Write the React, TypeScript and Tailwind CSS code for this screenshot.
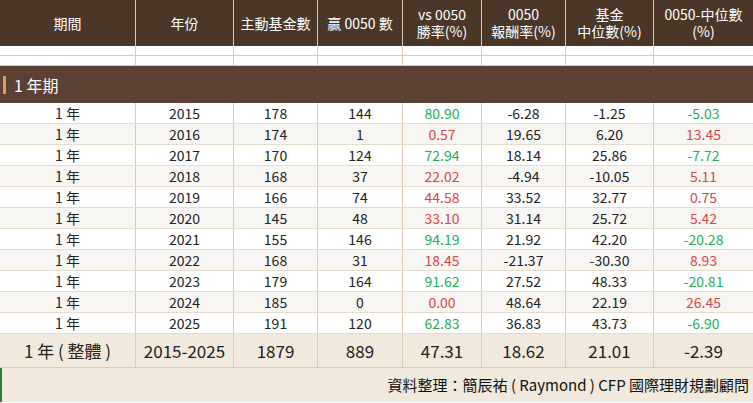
const rows: [string,string,string,string,string,string,string][] = [
["2015","178","144","80.90","-6.28","-1.25","-5.03"],
["2016","174","1","0.57","19.65","6.20","13.45"],
["2017","170","124","72.94","18.14","25.86","-7.72"],
["2018","168","37","22.02","-4.94","-10.05","5.11"],
["2019","166","74","44.58","33.52","32.77","0.75"],
["2020","145","48","33.10","31.14","25.72","5.42"],
["2021","155","146","94.19","21.92","42.20","-20.28"],
["2022","168","31","18.45","-21.37","-30.30","8.93"],
["2023","179","164","91.62","27.52","48.33","-20.81"],
["2024","185","0","0.00","48.64","22.19","26.45"],
["2025","191","120","62.83","36.83","43.73","-6.90"],
];
const W = ["w-[136px]","w-[98px]","w-[84px]","w-[85px]","w-[79px]","w-[84px]","w-[88px]","w-[99px]"];
const g = "text-[#1fae55]", r = "text-[#d84545]";
export default function App(){
  const cell = (i:number, extra="") => `${W[i]} shrink-0 border-r border-[#dccbb0] last:border-r-0 flex items-center justify-center ${extra}`;
  return (
    <div className="w-[753px] h-[403px] bg-white text-[#222] overflow-hidden" style={{fontFamily:'"Noto Sans CJK TC","Noto Sans",sans-serif'}}>
      <div className="flex h-[46px] bg-[#4a3728] text-white text-[14px] leading-[17px] text-center">
        {["期間","年份","主動基金數","贏 0050 數","vs 0050\n勝率(%)","0050\n報酬率(%)","基金\n中位數(%)","0050-中位數\n(%)"].map((t,i)=>(
          <div key={i} className={cell(i,"whitespace-pre-line border-[#a08a70]")}>{t}</div>))}
      </div>
      {[0,1].map(k=>(<div key={k} className="flex h-[10px] border-b border-[#dccbb0]">{W.map((_,i)=><div key={i} className={cell(i)}/>)}</div>))}
      <div className="h-[37px] bg-[#5c4033] flex items-center text-white text-[16px]">
        <div className="ml-[3px] w-[3px] h-[18px] bg-[#e0a050] mr-[8px]"/>1 年期
      </div>
      {rows.map((row,ri)=>(
        <div key={ri} className={`flex h-[21px] text-[14px] border-b border-[#e6dccb] ${ri%2? "bg-[#f8f6f2]":"bg-white"}`}>
          <div className={cell(0)}>1 年</div>
          {row.map((v,i)=>{
            let c="";
            if(i===3) c = parseFloat(v)>=50? g:r;
            if(i===6) c = parseFloat(v)<0? g:r;
            return <div key={i} className={cell(i+1,c)}>{v}</div>;
          })}
        </div>
      ))}
      <div className="flex h-[34px] bg-[#f0e9dc] text-[17px] border-b border-[#dccbb0]">
        {["1 年 ( 整體 )","2015-2025","1879","889","47.31","18.62","21.01","-2.39"].map((t,i)=>(
          <div key={i} className={cell(i)}>{t}</div>))}
      </div>
      <div className="h-[34px] bg-[#f0e9dc] border-l-2 border-[#2e7d32] flex items-center justify-end pr-[4px] text-[15px] text-[#111]">
        資料整理：簡辰祐 ( Raymond ) CFP 國際理財規劃顧問
      </div>
    </div>
  );
}
